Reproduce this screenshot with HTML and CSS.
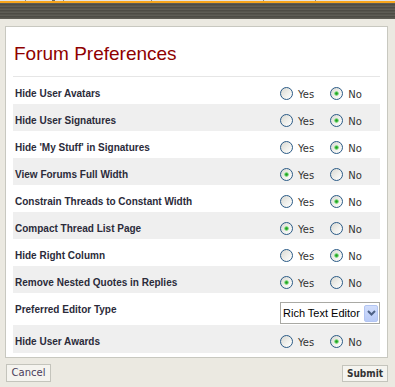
FILE: index.html
```html
<!DOCTYPE html>
<html>
<head>
<meta charset="utf-8">
<link rel="stylesheet" href="styles.css">
</head>
<body>
<div class="tabs">
  <span class="tab t1"></span><span class="tab t2"></span><span class="tab t3"></span><span class="tab t4"></span><span class="tab t5"></span><span class="tab t6"></span>
</div>
<div class="orange"></div>
<div class="band"></div>
<div class="page">
  <div class="panel">
    <h1 class="title">Forum Preferences</h1>
    <div class="rule"></div>
    <div class="rows">
      <div class="row"><div class="label">Hide User Avatars</div><div class="opts"><label class="opt"><input type="radio" name="r1"><span>Yes</span></label><label class="opt no"><input type="radio" name="r1" checked><span>No</span></label></div></div>
      <div class="row alt"><div class="label">Hide User Signatures</div><div class="opts"><label class="opt"><input type="radio" name="r2"><span>Yes</span></label><label class="opt no"><input type="radio" name="r2" checked><span>No</span></label></div></div>
      <div class="row"><div class="label">Hide 'My Stuff' in Signatures</div><div class="opts"><label class="opt"><input type="radio" name="r3"><span>Yes</span></label><label class="opt no"><input type="radio" name="r3" checked><span>No</span></label></div></div>
      <div class="row alt"><div class="label">View Forums Full Width</div><div class="opts"><label class="opt"><input type="radio" name="r4" checked><span>Yes</span></label><label class="opt no"><input type="radio" name="r4"><span>No</span></label></div></div>
      <div class="row"><div class="label">Constrain Threads to Constant Width</div><div class="opts"><label class="opt"><input type="radio" name="r5"><span>Yes</span></label><label class="opt no"><input type="radio" name="r5" checked><span>No</span></label></div></div>
      <div class="row alt"><div class="label">Compact Thread List Page</div><div class="opts"><label class="opt"><input type="radio" name="r6" checked><span>Yes</span></label><label class="opt no"><input type="radio" name="r6"><span>No</span></label></div></div>
      <div class="row"><div class="label">Hide Right Column</div><div class="opts"><label class="opt"><input type="radio" name="r7"><span>Yes</span></label><label class="opt no"><input type="radio" name="r7" checked><span>No</span></label></div></div>
      <div class="row alt"><div class="label">Remove Nested Quotes in Replies</div><div class="opts"><label class="opt"><input type="radio" name="r8" checked><span>Yes</span></label><label class="opt no"><input type="radio" name="r8"><span>No</span></label></div></div>
      <div class="row selrow"><div class="label sellabel">Preferred Editor Type</div><div class="select"><span class="seltext">Rich Text Editor</span><span class="selbtn"><svg width="9" height="6" viewBox="0 0 9 6"><path d="M1 1 L4.5 4.5 L8 1" fill="none" stroke="#4d6185" stroke-width="2"/></svg></span></div></div>
      <div class="row alt last"><div class="label">Hide User Awards</div><div class="opts"><label class="opt"><input type="radio" name="r10"><span>Yes</span></label><label class="opt no"><input type="radio" name="r10" checked><span>No</span></label></div></div>
    </div>
  </div>
  <div class="footer">
    <button class="btn cancel">Cancel</button>
    <button class="btn submit">Submit</button>
  </div>
</div>
</body>
</html>
```

FILE: styles.css
```css
html, body {
  margin: 0;
  padding: 0;
}
body {
  background: #ebe9e1;
  font-family: "Liberation Sans", Arial, sans-serif;
}
.tabs {
  height: 1px;
  background: #e4e4e0;
  display: flex;
}
.tab {
  display: block;
  height: 1px;
  border-right: 1px solid #8a8a86;
}
.t1 { width: 25px; }
.t2 { width: 26px; border-right: 3px solid #6a6a66; }
.t3 { width: 8px; }
.t4 { width: 87px; }
.t5 { width: 111px; }
.t6 { width: 51px; }
.orange {
  height: 2px;
  background: #f7a51c;
}
.band {
  height: 16px;
  background: repeating-linear-gradient(to bottom, #5e5d55 0px, #5e5d55 1px, #4d4c45 1px, #4d4c45 2px, #56554d 2px, #56554d 3px);
}
.page {
  padding: 7px 7px 0 5px;
}
.panel {
  background: #fff;
  border: 1px solid #c8c8c0;
  padding: 0 7px 4px 7px;
}
.title {
  margin: 0;
  padding: 15px 1px 11px;
  font-family: "Liberation Sans", Arial, sans-serif;
  font-weight: normal;
  font-size: 19px;
  line-height: 23px;
  color: #8f0000;
}
.rule {
  border-top: 1px solid #e6e6e6;
}
.row {
  display: grid;
  grid-template-columns: 1fr 100px;
  align-items: start;
  padding: 10px 0 4px 2px;
  line-height: 13px;
  height: 13px;
}
.row.alt {
  background: #efefef;
}
.row.last {
  padding-bottom: 5px;
}
.label {
  font-family: "Liberation Sans", Arial, sans-serif;
  font-weight: bold;
  font-size: 10px;
  color: #2b2b3a;
  white-space: nowrap;
}
.opts {
  display: flex;
  align-items: center;
  height: 13px;
}
.opt {
  display: flex;
  align-items: center;
  font-family: "DejaVu Sans", Verdana, sans-serif;
  font-size: 10px;
  color: #333;
}
.opt span {
  margin-left: 5px;
  position: relative;
  top: 1px;
}
.opt.no {
  margin-left: 16px;
}
.opt input {
  -webkit-appearance: none;
  appearance: none;
  margin: 0;
  width: 13px;
  height: 13px;
  box-sizing: border-box;
  border: 1px solid #2a5a86;
  border-radius: 50%;
  background: linear-gradient(135deg, #d8d8d2 0%, #f0f0ec 55%, #ffffff 100%);
}
.opt input:checked {
  background: radial-gradient(circle at 50% 50%, #1e9e1e 0px, #34b034 1px, #8fdc8f 2px, rgba(255,255,255,0) 2.6px), linear-gradient(135deg, #d8d8d2 0%, #f0f0ec 55%, #ffffff 100%);
}
.row.selrow {
  padding: 9px 0 1px 2px;
  height: 22px;
}
.sellabel {
  margin-top: 1px;
}
.select {
  box-sizing: border-box;
  width: 100px;
  height: 22px;
  border: 1px solid #a9a9a4;
  background: #fff;
  display: flex;
  align-items: center;
  justify-content: space-between;
  padding: 0 1px 0 2px;
}
.seltext {
  font-family: "Liberation Sans", Arial, sans-serif;
  font-size: 11px;
  color: #000;
  white-space: nowrap;
}
.selbtn {
  box-sizing: border-box;
  width: 14px;
  height: 17px;
  background: linear-gradient(to bottom, #d2defc, #b9cbf7);
  border: 1px solid #b3c5f2;
  border-radius: 2px;
  display: flex;
  align-items: center;
  justify-content: center;
}
.footer {
  display: flex;
  justify-content: space-between;
  align-items: flex-start;
  padding: 6px 0 0 1px;
}
.btn {
  box-sizing: border-box;
  height: 18px;
  padding: 0 3px;
  margin: 0;
  border: 1px solid #c4c4bc;
  background: #f5f4ef;
  font-family: "DejaVu Sans", Verdana, sans-serif;
  font-size: 10px;
  line-height: 16px;
  border-radius: 0;
}
.cancel {
  width: 45px;
  color: #4a3d5c;
}
.submit {
  width: 46px;
  margin-top: 1px;
  height: 17px;
  font-family: "DejaVu Sans Condensed", "DejaVu Sans", sans-serif;
  font-weight: bold;
  color: #333;
}
```
